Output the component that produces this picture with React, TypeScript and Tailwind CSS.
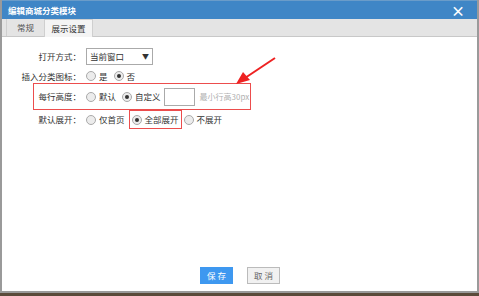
import React from "react";

const font = {
  fontFamily: '"Noto Sans CJK SC", "Liberation Sans", sans-serif',
};

const Radio = ({ checked, label }: { checked?: boolean; label: string }) => {
  return (
    <span className="flex items-center gap-[3px]">
      <span className="w-[10px] h-[10px] rounded-full border border-[#a9a9a9] bg-[#ececec] flex items-center justify-center">
        {checked && <span className="w-[4px] h-[4px] rounded-full bg-[#333]" />}
      </span>
      <span>{label}</span>
    </span>
  );
};

const Row = ({ label, children, className = "" }: { label: string; children: React.ReactNode; className?: string }) => {
  return (
    <div className={"flex items-center whitespace-nowrap " + className}>
      <div className="w-[84px] text-right pr-[5px]">{label}</div>
      <div className="flex items-center gap-[6px]">{children}</div>
    </div>
  );
};

const App = () => {
  return (
    <div className="w-[479px] h-[296px] bg-[#5a4a3a] relative overflow-hidden text-[8.5px] text-[#333]" style={font}>
      <div className="h-[293px] bg-white border-x-[2px] border-b-[2px] border-[#9a9a9a] flex flex-col">
        <div className="h-[19px] bg-[#3f86c6] border-t border-[#6a9cc9] flex items-center justify-between pl-[6px] pr-[8px] text-white">
          <span className="font-bold text-[8.5px]">编辑商城分类模块</span>
          <span className="font-bold text-[14px] leading-none mr-[4px]">×</span>
        </div>
        <div className="h-[18px] bg-[#e4e4e4] border-b border-[#c8c8c8] flex items-end pl-[4px] whitespace-nowrap">
          <div className="h-[17px] w-[38px] flex items-center justify-center border-l border-[#cfcfcf] text-[#555]">常规</div>
          <div className="h-[18px] w-[49px] flex items-center justify-center bg-[#f4f4f4] border-x border-t border-[#cfcfcf] -mb-px">展示设置</div>
        </div>
        <div className="flex-1 flex flex-col pt-[10px]">
          <Row label="打开方式：" className="h-[19px]">
            <div className="w-[67px] h-[17px] border border-[#aaa] flex items-center justify-between px-[3px]">
              <span>当前窗口</span>
              <span className="text-[7px]">▼</span>
            </div>
          </Row>
          <Row label="插入分类图标：" className="h-[17px] pt-[3px]">
            <Radio label="是" />
            <Radio checked label="否" />
          </Row>
          <div className="ml-[31px] w-[218px] h-[27px] border border-[#ec4d4d] flex items-center whitespace-nowrap">
            <div className="w-[52px] text-right pr-[5px]">每行高度：</div>
            <div className="flex items-center gap-[6px]">
              <Radio label="默认" />
              <Radio checked label="自定义" />
              <div className="w-[31px] h-[18px] border border-[#aaa] bg-white -ml-[3px]" />
              <span className="text-[#b0b0b0] text-[8px] -ml-[1px]">最小行高30px</span>
            </div>
          </div>
          <Row label="默认展开：" className="h-[19px]">
            <Radio label="仅首页" />
            <div className="h-[19px] border border-[#ec4d4d] flex items-center px-[2px] -ml-[2px] -mr-[4px]">
              <Radio checked label="全部展开" />
            </div>
            <Radio label="不展开" />
          </Row>
          <div className="flex-1" />
          <div className="flex justify-center gap-[14px] pb-[7px] pl-[1px]">
            <button className="w-[33px] h-[17px] bg-[#3e98f0] text-white tracking-[2px] pl-[2px]">保存</button>
            <button className="w-[33px] h-[17px] bg-[#f1f1f1] border border-[#bbb] text-[#666] tracking-[2px] pl-[2px]">取消</button>
          </div>
        </div>
      </div>
      <svg className="absolute left-0 top-0" width="479" height="296">
        <line x1="275" y1="58" x2="245" y2="78" stroke="#ee2222" strokeWidth="2" />
        <polygon points="236,84 243,72 250,80" fill="#ee2222" />
      </svg>
    </div>
  );
};

export default App;
